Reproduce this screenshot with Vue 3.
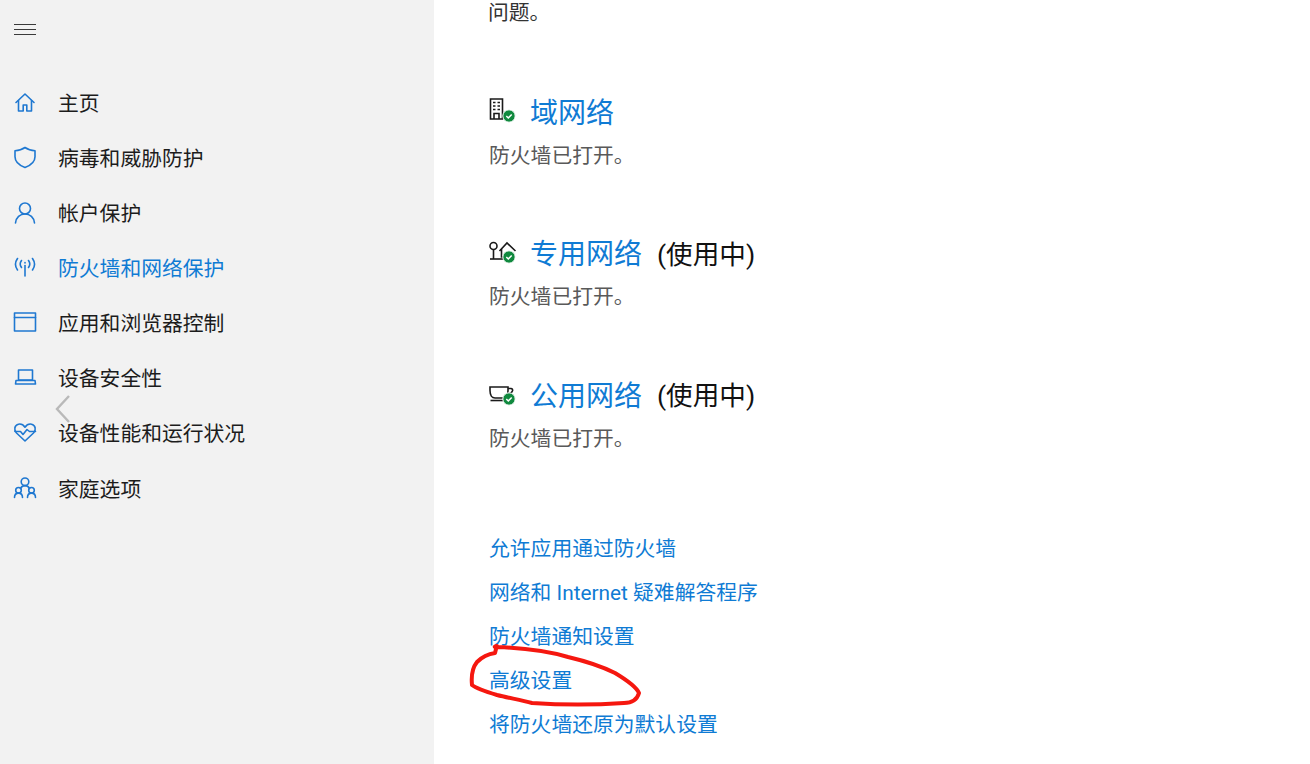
<template>
  <div class="page">
    <aside class="sidebar">
      <button class="menu-btn" aria-label="menu">
        <svg width="22" height="12" viewBox="0 0 22 12"><path d="M0 .5h22M0 5.500h22M0 10.500h22" stroke="#3a3a3a" stroke-width="1" fill="none" /></svg>
      </button>
      <nav class="nav">
        <div v-for="item in navItems" :key="item.label" class="nav-item" :class="{ active: item.active }">
          <span class="nav-icon">
            <svg width="24" height="24" viewBox="0 0 24 24" fill="none" stroke="#1f78d1" stroke-width="1.6" stroke-linejoin="round" stroke-linecap="round">
              <path v-for="d in item.paths" :key="d" :d="d" />
            </svg>
          </span>
          <span>{{ item.label }}</span>
        </div>
      </nav>
      <svg class="back-chevron" width="16" height="28" viewBox="0 0 16 28"><path d="M14 1 2 14l12 13" fill="none" stroke="#b9b9b9" stroke-width="2.400" /></svg>
    </aside>

    <main class="content">
      <p class="intro">问题。</p>

      <section v-for="net in networks" :key="net.name" class="network">
        <div class="network-head">
          <span class="network-icon">
            <svg width="28" height="28" viewBox="0 0 28 28" fill="none" stroke="#1a1a1a" stroke-width="1.600">
              <path v-for="d in net.paths" :key="d" :d="d" />
              <circle cx="20" cy="19" r="6.200" fill="#10893e" stroke="#fff" stroke-width="1" />
              <path d="m17.300 19 2 2 3.400-3.600" stroke="#fff" stroke-width="1.500" />
            </svg>
          </span>
          <a class="network-name">{{ net.name }}</a>
          <span v-if="net.inUse" class="in-use">(使用中)</span>
        </div>
        <p class="status">防火墙已打开。</p>
      </section>

      <div class="links">
        <a v-for="link in links" :key="link">{{ link }}</a>
      </div>
    </main>

    <svg class="scribble" width="1310" height="764" viewBox="0 0 1310 764">
      <path d="M496 649l-1 4c-7 1-13 4-18 9-4 5-6 13-5 23 5 4 15 7 25 10 12 3 24 5 35 8 30 2 62 2 92 0 8 0 13-3 15-10-3-7-14-14-24-20-16-8-30-12-47-16-20-6-46-9-70-10-3 0-5 0-1-1" fill="none" stroke="#f5170f" stroke-width="4" stroke-linecap="round" stroke-linejoin="round" />
    </svg>
  </div>
</template>

<script setup>
const navItems = [
  { label: '主页', paths: ['M3 12.500 12 4l9 8.500', 'M5.500 10.500V21h4.700v-6h3.600v6h4.700V10.500'] },
  { label: '病毒和威胁防护', paths: ['M12 2.500c3 2.200 6 3 10 3.200v6c0 5-4 8.500-10 10.800C6 20.200 2 16.700 2 11.700v-6c4-.2 7-1 10-3.200Z'] },
  { label: '帐户保护', paths: ['M12 3a5.500 5.500 0 1 1 0 11 5.500 5.500 0 0 1 0-11Z', 'M2.500 23c.5-5.500 4.500-9 9.500-9s9 3.500 9.500 9'] },
  { label: '防火墙和网络保护', active: true, paths: ['M12 10.500V21', 'M12 7.500v.5', 'M8.500 5.500c-1.500 2-1.500 5 0 7', 'M15.500 5.500c1.500 2 1.500 5 0 7', 'M4.500 3.500c-2.500 3.500-2.500 8 0 11.500', 'M19.500 3.500c2.500 3.500 2.500 8 0 11.500'] },
  { label: '应用和浏览器控制', paths: ['M1.500 3h21v18h-21Z', 'M1.500 7.500h21'] },
  { label: '设备安全性', paths: ['M5.500 5h14v10h-14Z', 'M3 15.500h19l.5 3.500H2.500Z'] },
  { label: '设备性能和运行状况', paths: ['M12 21 3.500 13C.5 10 1.500 5 5.500 4.200c2.500-.5 5 .8 6.500 3 1.500-2.200 4-3.500 6.500-3C22.500 5 23.500 10 20.500 13Z', 'M2 11.500h5.500l2.500 3 4-5 2.500 2h6'] },
  { label: '家庭选项', paths: ['M12 2a3.800 3.800 0 1 1 0 7.600A3.800 3.800 0 0 1 12 2Z', 'M5.500 11.500a2.800 2.800 0 1 1 0 5.600 2.800 2.800 0 0 1 0-5.600Z', 'M18.500 11.500a2.800 2.800 0 1 1 0 5.600 2.800 2.800 0 0 1 0-5.600Z', 'M1.500 21.500c0-2.500 1.500-4.400 4-4.400s4 1.900 4 4.400', 'M14.500 21.500c0-2.500 1.500-4.400 4-4.400s4 1.900 4 4.400', 'M7.500 12.500c1-1.800 2.700-2.900 4.500-2.900s3.500 1.100 4.500 2.900'] },
]

const networks = [
  { name: '域网络', paths: ['M1.500 2h12v20h-12Z', 'M4 5.500h2.500M8.500 5.500H11M4 9h2.500M8.500 9H11M4 12.500h2.500M8.500 12.500H11', 'M5 22v-5.500h5V22'] },
  { name: '专用网络', inUse: true, paths: ['M4.500 4.500a3.500 3.500 0 1 1 0 7 3.500 3.500 0 0 1 0-7Z', 'M4.500 11.500V21', 'M1 21h20', 'M10.500 13l7.500-8 8.500 8', 'M12.500 11V19h8'] },
  { name: '公用网络', inUse: true, paths: ['M1 7h18v3.500c0 4.500-2 7.500-5 7.500H6c-3 0-5-3-5-7.500Z', 'M19 8.500h3c2.500 0 2.500 4.500-3 5.500', 'M1.500 20.500h17'] },
]

const links = ['允许应用通过防火墙', '网络和 Internet 疑难解答程序', '防火墙通知设置', '高级设置', '将防火墙还原为默认设置']
</script>

<style>
html, body {
  margin: 0;
  overflow: hidden;
}
</style>

<style scoped>
.page {
  position: relative;
  display: flex;
  width: 1310px;
  height: 764px;
  overflow: hidden;
  background: #fff;
  font-family: Roboto, "Noto Sans CJK SC", sans-serif;
  font-size: 20.8px;
  color: #1c1c1c;
}

.sidebar {
  position: relative;
  flex: 0 0 434px;
  box-sizing: border-box;
  height: 100%;
  padding-top: 24px;
  background: #f2f2f2;
}

.menu-btn {
  display: block;
  margin: 0 0 0 14px;
  padding: 0;
  height: 12px;
  border: 0;
  background: none;
}

.menu-btn svg {
  display: block;
}

.nav {
  margin-top: 38px;
}

.nav-item {
  display: flex;
  align-items: center;
  height: 55.15px;
  padding-left: 13px;
}

.nav-item.active {
  color: #0f7bd4;
}

.nav-icon {
  display: flex;
  width: 24px;
  height: 24px;
  margin-right: 21px;
}

.back-chevron {
  position: absolute;
  left: 55px;
  top: 395px;
}

.content {
  flex: 1;
  padding-left: 55px;
}

.intro {
  margin: 0 0 0 -1px;
  padding-top: 1px;
  height: 23px;
  line-height: 24px;
  color: #333;
}

.network {
  height: 141.3px;
}

.network:first-of-type {
  margin-top: 63px;
}

.network-head {
  display: flex;
  align-items: center;
  height: 48px;
}

.network-icon {
  display: flex;
  width: 28px;
  height: 28px;
  margin-right: 13px;
}

.network-name {
  font-size: 28px;
  color: #0f7bd4;
}

.in-use {
  margin-left: 15px;
  font-size: 26.6px;
  color: #111;
}

.status {
  margin: 0;
  padding-top: 7px;
  line-height: 28px;
  color: #595959;
}

.links {
  display: flex;
  flex-direction: column;
  margin-top: 16px;
}

.links a {
  height: 44px;
  line-height: 44px;
  color: #0f7bd4;
}

.scribble {
  position: absolute;
  left: 0;
  top: 0;
  pointer-events: none;
}
</style>
